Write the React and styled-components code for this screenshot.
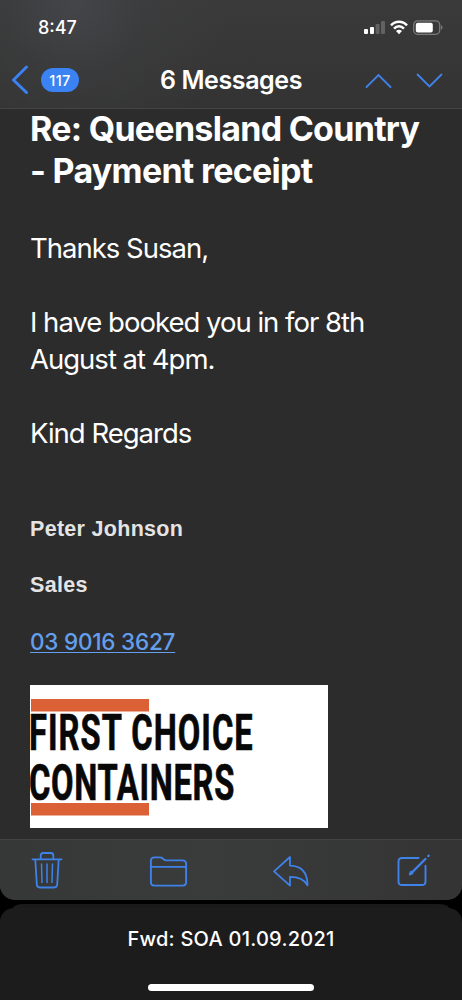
import React from 'react';
import styled, { createGlobalStyle } from 'styled-components';

const GlobalStyle = createGlobalStyle`
  * {
    box-sizing: border-box;
  }

  body {
    margin: 0;
    background: #000;
    font-family: Inter, "Liberation Sans", sans-serif;
    -webkit-font-smoothing: antialiased;
  }

  h1, h2, p {
    margin: 0;
  }

  svg {
    display: block;
  }
`;

const Phone = styled.div`
  display: flex;
  flex-direction: column;
  width: 462px;
  height: 1000px;
  overflow: hidden;
  background: #000;
`;

const MailSheet = styled.main`
  display: flex;
  flex-direction: column;
  flex-shrink: 0;
  height: 900px;
  overflow: hidden;
  background: #2c2c2c;
  border-radius: 0 0 15px 15px;
`;

const Header = styled.header`
  height: 109px;
  flex-shrink: 0;
  border-bottom: 1px solid #444646;
  background: radial-gradient(circle at 75px 5px, #444549 0, rgba(62, 63, 65, 0.5) 70px, transparent 160px),
    linear-gradient(#3a3a3a, #333);
`;

const StatusBar = styled.div`
  display: flex;
  align-items: center;
  justify-content: space-between;
  height: 55px;
  padding: 0 19px 0 38px;
`;

const Time = styled.span`
  color: #fff;
  font-size: 18px;
  font-weight: 500;
  line-height: 22px;
`;

const NavBar = styled.nav`
  display: grid;
  grid-template-columns: 150px 1fr 150px;
  align-items: center;
  height: 50px;
`;

const BackButton = styled.a`
  display: flex;
  align-items: center;
  gap: 12px;
  padding-left: 11px;
`;

const Count = styled.span`
  width: 38px;
  height: 24px;
  border-radius: 12px;
  background: #3b82f2;
  color: #fff;
  font-size: 14.5px;
  font-weight: 500;
  line-height: 25px;
  letter-spacing: 0.4px;
  text-align: center;
`;

const NavTitle = styled.h2`
  color: #fff;
  font-size: 25px;
  font-weight: 600;
  line-height: 30px;
  letter-spacing: -0.4px;
  text-align: center;
  white-space: nowrap;
`;

const Arrows = styled.div`
  display: flex;
  justify-content: flex-end;
  gap: 24px;
  padding: 2px 19px 0 0;
`;

const Message = styled.article`
  height: 730px;
  padding: 0 30px;
  color: #fff;
`;

const Subject = styled.h1`
  margin-top: -1px;
  font-size: 34px;
  font-weight: 700;
  line-height: 42px;
  letter-spacing: -0.72px;
  white-space: nowrap;
`;

const Body = styled.div`
  margin-top: 38px;
  font-size: 27.5px;
  font-weight: 400;
  line-height: 37px;
  letter-spacing: -1px;
  white-space: nowrap;
`;

const Paragraph = styled.p`
  margin-bottom: 37px;
`;

const Signature = styled.div`
  display: flex;
  flex-direction: column;
  align-items: flex-start;
  margin-top: 64px;
`;

const SignatureLine = styled.p`
  height: 56px;
  color: #e4e4e4;
  font-family: "Liberation Sans", Arial, sans-serif;
  font-size: 21.5px;
  font-weight: 700;
  line-height: 26px;
  letter-spacing: 0.3px;
`;

const PhoneLink = styled.a`
  color: #639fec;
  font-size: 22.5px;
  font-weight: 500;
  line-height: 28px;
  letter-spacing: -0.22px;
  text-decoration: underline;
  text-decoration-thickness: 1px;
  text-underline-offset: 1.5px;
  text-decoration-skip-ink: none;
`;

const Logo = styled.svg`
  margin-top: 29px;
`;

const Toolbar = styled.footer`
  display: flex;
  flex-shrink: 0;
  justify-content: space-between;
  height: 61px;
  padding: 12px 31px 0;
  border-top: 1px solid #414242;
  background: linear-gradient(90deg, #363737, #3a3b3b 45%, #343435);
`;

const StackEdge = styled.div`
  flex-shrink: 0;
  height: 4px;
  margin: 4px 13px 0;
  border-radius: 10px 10px 0 0 / 4px 4px 0 0;
  background: #1a1a1a;
`;

const NextSheet = styled.section`
  display: flex;
  flex-direction: column;
  align-items: center;
  height: 92px;
  padding-top: 18px;
  border-radius: 14px 14px 0 0;
  background: #1c1c1c;
`;

const NextSubject = styled.h2`
  color: #fff;
  font-size: 20px;
  font-weight: 540;
  line-height: 26px;
  letter-spacing: 0.25px;
  white-space: nowrap;
`;

const HomeIndicator = styled.div`
  width: 166px;
  height: 7px;
  margin-top: 32px;
  border-radius: 4px;
  background: #fff;
`;

const BLUE = '#3f82ea';

const StatusIcons = () => (
  <svg width="80" height="16" viewBox="0 0 80 16">
    <rect x="1" y="9" width="4" height="5" rx="1" fill="#fff" />
    <rect x="7" y="7" width="4" height="7" rx="1" fill="#fff" />
    <rect x="12.6" y="4" width="4" height="10" rx="1" fill="#626262" />
    <rect x="18" y="1" width="4" height="13" rx="1" fill="#626262" />
    <g fill="none" stroke="#fff" strokeWidth="2.5">
      <path d="M28 5.4C32.5.6 39.5.6 44 5.4" />
      <path d="M31 8.6c3-3 7-3 10 0" />
    </g>
    <path d="M33 11q3-2.3 6 0l-3 3.3z" fill="#fff" />
    <rect x="50.7" y=".8" width="26" height="13.5" rx="4" fill="none" stroke="#7b7b7b" strokeWidth="1.3" />
    <rect x="52.8" y="2.8" width="17" height="9.6" rx="2" fill="#fff" />
    <path d="M78 5q3 2.5 0 5z" fill="#7b7b7b" />
  </svg>
);

const Trash = () => (
  <svg width="32" height="38" viewBox="0 0 32 38" fill="none" stroke={BLUE} strokeWidth="1.8" strokeLinecap="round" strokeLinejoin="round">
    <path d="M1.5 7.3h29M9.7 7V3.5Q9.7 1 12.2 1h7.6q2.5 0 2.5 2.5V7M4.3 7.5l1.5 25q.2 3 3.2 3h14q3 0 3.2-3l1.5-25" />
    <path d="m10.5 12 .5 18.5M16 12v18.5M21.5 12 21 30.5" strokeWidth="1.5" />
  </svg>
);

const Folder = () => (
  <svg width="38" height="38" viewBox="0.5 0 38 38" overflow="visible" fill="none" stroke={BLUE} strokeWidth="1.9" strokeLinejoin="round">
    <path d="M1.4 30V9q0-3.6 3.6-3.6h5.4q1.6 0 2.8 1.1l1 .9q1.1 1 2.8 1H33q3.6 0 3.6 3.6v18q0 3.6-3.6 3.6H5q-3.6 0-3.6-3.6zM1.4 14.9h35.2" />
  </svg>
);

const Reply = () => (
  <svg width="36" height="38" viewBox="1.2 0 36 38" overflow="visible" fill="none" stroke={BLUE} strokeWidth="1.8" strokeLinejoin="round">
    <path d="M1.2 19.4 17.2 5v8.6c11 .2 17.5 6.7 17.5 19.7-3.3-6.2-8.5-8.4-17.5-8.4v8.7z" />
  </svg>
);

const Compose = () => (
  <svg width="34" height="38" viewBox="0 0 34 38" fill="none" stroke={BLUE} strokeWidth="1.9" strokeLinecap="round" strokeLinejoin="round">
    <path d="M21.5 6H5Q1.5 6 1.5 9.5v20Q1.5 33 5 33h20q3.5 0 3.5-3.5V13.8" />
    <path d="m14.4 21 14-14" strokeWidth="2.4" />
    <path d="m12.9 22.3 1-2.4 1.4 1.4zM31.2 4.1l.5-.5" strokeWidth="2.2" />
  </svg>
);

const App = () => {
  return (
    <>
      <GlobalStyle />
      <Phone>
        <MailSheet>
          <Header>
            <StatusBar>
              <Time>8:47</Time>
              <StatusIcons />
            </StatusBar>
            <NavBar>
              <BackButton>
                <svg width="18" height="30" viewBox="0 0 18 30" fill="none" stroke="#3b82f2" strokeWidth="3" strokeLinecap="round" strokeLinejoin="round">
                  <path d="M15.5 2 2.5 15l13 12.5" />
                </svg>
                <Count>117</Count>
              </BackButton>
              <NavTitle>6 Messages</NavTitle>
              <Arrows>
                <svg width="27" height="16" viewBox="0 0 27 16" fill="none" stroke={BLUE} strokeWidth="1.8" strokeLinecap="round">
                  <path d="M1.5 14 13.5 2l12 12" />
                </svg>
                <svg width="27" height="16" viewBox="0 0 27 16" fill="none" stroke={BLUE} strokeWidth="1.8" strokeLinecap="round">
                  <path d="m1.5 1.5 12 12 12-12" />
                </svg>
              </Arrows>
            </NavBar>
          </Header>
          <Message>
            <Subject>
              Re: Queensland Country<br />- Payment receipt
            </Subject>
            <Body>
              <Paragraph>Thanks Susan,</Paragraph>
              <Paragraph>I have booked you in for 8th<br />August at 4pm.</Paragraph>
              <Paragraph>Kind Regards</Paragraph>
            </Body>
            <Signature>
              <SignatureLine>Peter Johnson</SignatureLine>
              <SignatureLine>Sales</SignatureLine>
              <PhoneLink href="tel:0390163627">03 9016 3627</PhoneLink>
              <Logo width="298" height="143" viewBox="0 0 298 143">
                <rect width="298" height="143" fill="#fff" />
                <rect x="1" y="14" width="118" height="12.5" fill="#db6036" />
                <rect x="1" y="118" width="118" height="12.5" fill="#db6036" />
                <g fontFamily="Roboto, sans-serif" fontSize="49.5" fontWeight="700" fill="#080808" stroke="#080808" strokeWidth=".7">
                  <text transform="translate(-1 64.5) scale(.66 1)" textLength="339" lengthAdjust="spacing">FIRST CHOICE</text>
                  <text transform="translate(-1 114.5) scale(.66 1)" textLength="311" lengthAdjust="spacing">CONTAINERS</text>
                </g>
              </Logo>
            </Signature>
          </Message>
          <Toolbar>
            <Trash />
            <Folder />
            <Reply />
            <Compose />
          </Toolbar>
        </MailSheet>
        <StackEdge />
        <NextSheet>
          <NextSubject>Fwd: SOA 01.09.2021</NextSubject>
          <HomeIndicator />
        </NextSheet>
      </Phone>
    </>
  );
};

export default App;
